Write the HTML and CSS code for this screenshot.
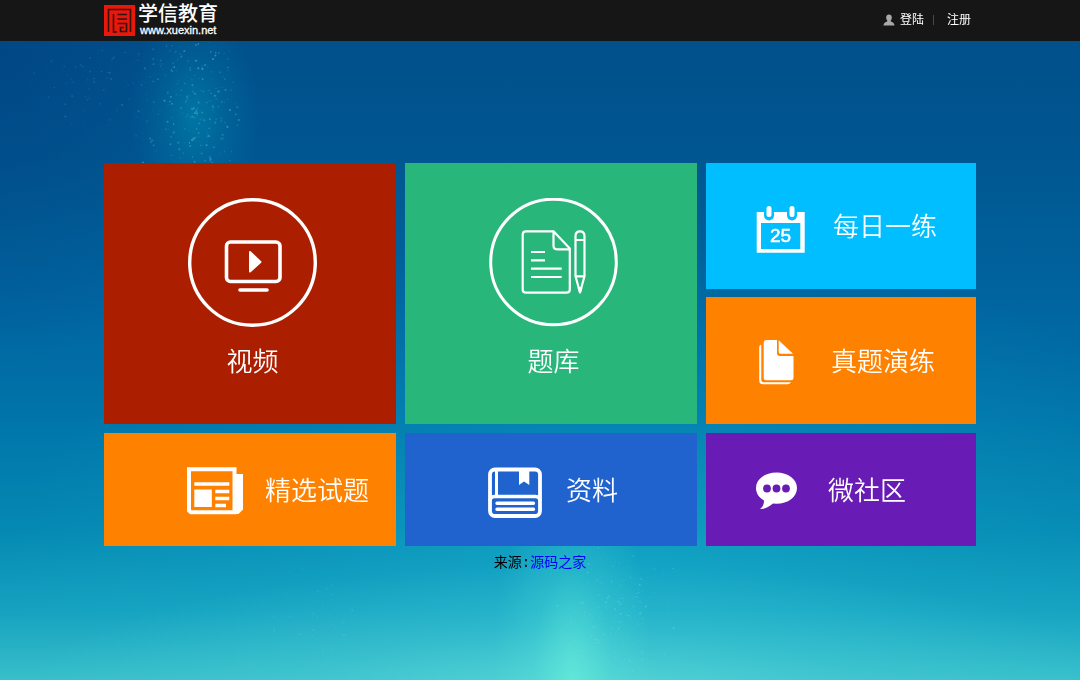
FILE: index.html
```html
<!DOCTYPE html>
<html lang="zh-CN">
<head>
<meta charset="utf-8">
<meta name="viewport" content="width=device-width, initial-scale=1">
<title>学信教育</title>
<link rel="stylesheet" href="styles.css">
</head>
<body>
<canvas class="stars" id="stars" aria-hidden="true"></canvas>
<header class="topbar">
  <div class="wrap topbar-inner">
    <a class="logo" href="#">
      <svg class="logo-mark" viewBox="0 0 31 31" aria-hidden="true">
        <rect width="31" height="31" fill="#ea170b"/>
        <path d="M4.500 27V4.500H26.500V27M9.500 9V27H13M13.500 9.500H23M13.500 14H23M13.500 18.500H22.500V26.500H16.500V22.500H20" fill="none" stroke="#36100d" stroke-width="1.600"/>
      </svg>
      <span class="logo-text"><span class="logo-name">学信教育</span><span class="logo-url">www.xuexin.net</span></span>
    </a>
    <nav class="account">
      <a href="#"><svg class="user" viewBox="0 0 12 12" aria-hidden="true"><path d="M6 0.500C8 .500 9 2 8.800 4 8.700 5.500 8 6 7.600 6.800 7.600 8 11.500 8.300 11.500 11.500H.5C.5 8.300 4.400 8 4.400 6.800 4 6 3.300 5.500 3.200 4 3 2 4 .500 6 .500Z" fill="#a9a9a9"/></svg>登陆</a>
      <span class="divider"></span>
      <a href="#">注册</a>
    </nav>
  </div>
</header>
<main class="wrap">
  <div class="tiles">
    <a class="tile large video" href="#">
      <svg class="round-icon" viewBox="0 0 130 130" fill="none" stroke="#fff" aria-hidden="true">
        <circle cx="64.500" cy="64.500" r="62.800" stroke-width="3.400"/>
        <rect x="38.500" y="44" width="53.500" height="39.500" rx="4" stroke-width="3.600"/>
        <path d="M62 54V73.500L72.500 64Z" fill="#fff" stroke-width="2" stroke-linejoin="round"/>
        <path d="M52 92H79" stroke-width="3.600" stroke-linecap="round"/>
      </svg>
      <span>视频</span>
    </a>
    <a class="tile large bank" href="#">
      <svg class="round-icon" viewBox="0 0 130 130" fill="none" stroke="#fff" aria-hidden="true">
        <circle cx="64.500" cy="64" r="62.800" stroke-width="3"/>
        <g stroke-width="2.200" stroke-linejoin="round">
          <path d="M64.500 33.300H37Q33.700 33.300 33.700 36.500V91.500Q33.700 94.700 37 94.700H77.500Q80.800 94.700 80.800 91.500V50.500L64.500 33.300V47.500Q64.500 51.300 68 51.300H80.800"/>
          <path d="M42 54H56M42 62.300H56M42 70.700H72.700M42 79H72.700"/>
          <path d="M86.500 78.300V38Q86.500 33.300 91 33.300T95.500 38V78.300L91 94.500ZM86.500 42H95.500M86.500 78.300H95.500"/>
          <path d="M89.800 90H92.200L91 94Z" fill="#fff"/>
        </g>
      </svg>
      <span>题库</span>
    </a>
    <div class="stack">
      <a class="tile small daily" href="#">
        <svg class="icon-50" viewBox="0 0 50 60" aria-hidden="true">
          <path d="M.7 16H48.700V56.700H.7ZM5 27V53H44.300V27Z" fill="#fff" fill-rule="evenodd"/>
          <path d="M13 13V19.500M36 13V19.500" stroke="#00beff" stroke-width="10" stroke-linecap="round"/>
          <path d="M13 12.500V18.500M36 12.500V18.500" stroke="#fff" stroke-width="5" stroke-linecap="round"/>
          <text class="date" x="24.500" y="46" text-anchor="middle">25</text>
        </svg>
        <span>每日一练</span>
      </a>
      <a class="tile small exam" href="#">
        <svg class="icon-48" viewBox="0 0 48 60" fill="#fff" aria-hidden="true">
          <path d="M10 9H21V22Q21 25 24 25H37.500V47Q37.500 49.300 35 49.300H10Q7.700 49.300 7.700 47V11.500Q7.700 9 10 9Z"/>
          <path d="M22.700 9.200L37 22.800H24.500Q22.700 22.800 22.700 21Z"/>
          <path d="M5.300 13.500V49Q5.300 51.300 7.700 51.300H35Q33.800 53.300 31.500 53.300H7Q3.200 53.300 3.200 49.500V16Q3.200 14 5.300 13.500Z"/>
        </svg>
        <span>真题演练</span>
      </a>
    </div>
    <a class="tile small wide selected" href="#">
      <svg class="icon-57" viewBox="0 0 57 60" fill="none" stroke="#fff" aria-hidden="true">
        <path d="M2 9.300H47.500V52.200H4L2 50.500Z" stroke-width="4"/>
        <path d="M48 14H56V49.500L51.500 54H46V14Z" fill="#fff" stroke="none"/>
        <path d="M7.300 24H42.300M28.300 31.500H42.300M28.300 38.500H42.300M28.300 45.500H39" stroke-width="3.600"/>
        <path d="M7.300 29.500H24.800V47H7.300Z" fill="#fff" stroke="none"/>
      </svg>
      <span>精选试题</span>
    </a>
    <a class="tile small wide material" href="#">
      <svg class="icon-57" viewBox="0 0 57 60" fill="none" stroke="#fff" aria-hidden="true">
        <rect x="2" y="9.500" width="50" height="46.500" rx="5" stroke-width="3.800"/>
        <path d="M8.500 9V37" stroke-width="3"/>
        <path d="M2 41Q2 36.500 6.500 36.500H47.500Q52 36.500 52 41" stroke-width="3.600"/>
        <path d="M9 43.300H45.500M9 49.300H45.500" stroke-width="3.400" stroke-linecap="round"/>
        <path d="M31 10H41.300V25L36 21.500L31 25Z" fill="#fff" stroke="none"/>
      </svg>
      <span>资料</span>
    </a>
    <a class="tile small community" href="#">
      <svg class="icon-45" viewBox="0 0 45 60" aria-hidden="true">
        <path d="M20.500 12.500C32 12.500 41 19 41 28S32 43.800 20.500 43.800L17 43.500C13 47 9 49 4 49 7 47 8 44 8 40.500 3 37.500 0 33.500 0 28 0 19 9 12.500 20.500 12.500Z" fill="#fff"/>
        <g fill="#681bb5"><circle cx="11" cy="28.500" r="3.900"/><circle cx="20.500" cy="28.500" r="3.900"/><circle cx="30" cy="28.500" r="3.900"/></g>
      </svg>
      <span>微社区</span>
    </a>
  </div>
  <p class="source">来源:<a href="#">源码之家</a></p>
</main>
<script src="stars.js"></script>
</body>
</html>
```
FILE: styles.css
```css
* { box-sizing: border-box; }

body {
  margin: 0;
  min-height: 100vh;
  font-family: "Liberation Sans", "Noto Sans CJK SC", sans-serif;
  background:
    radial-gradient(ellipse 65px 110px at 18% 17%, rgba(0, 150, 185, .5), rgba(0, 150, 185, .2) 50%, transparent),
    radial-gradient(ellipse 80px 220px at 53% 100%, rgba(110, 245, 220, .6), rgba(90, 235, 220, .22) 50%, transparent),
    radial-gradient(ellipse 560px 130px at 54% 102%, rgba(120, 230, 220, .5), rgba(110, 225, 220, .2) 50%, transparent),
    radial-gradient(ellipse 620px 340px at 58% 84%, rgba(30, 190, 215, .4), rgba(30, 190, 215, .16) 50%, transparent),
    radial-gradient(ellipse 200px 300px at 0 10%, rgba(0, 50, 120, .3), transparent),
    linear-gradient(#00508b 6%, #005791 24%, #0065a0 45%, #0075aa 62%, #0589b3 78%, #16a2c0 90%, #38bfca);
  background-attachment: fixed;
}

a { text-decoration: none; }

svg { display: block; flex: none; }

.stars {
  position: fixed;
  inset: 0;
  width: 100%;
  height: 100%;
  z-index: -1;
}

.wrap {
  width: 100%;
  max-width: 872px;
  margin: 0 auto;
}

.topbar { background: #161616; }

.topbar-inner {
  display: flex;
  justify-content: space-between;
  align-items: center;
  height: 41px;
  padding-bottom: 1px;
}

.logo {
  display: flex;
  gap: 3px;
  align-items: center;
  color: #fff;
}

.logo-mark { width: 31px; height: 31px; }

.logo-text { display: flex; flex-direction: column; }

.logo-name {
  font-size: 20px;
  line-height: 20px;
  font-weight: 500;
}

.logo-url {
  padding-left: 2px;
  font-size: 11px;
  line-height: 12px;
  -webkit-text-stroke: 0.3px #fff;
}

.account {
  display: flex;
  align-items: center;
  padding-right: 5px;
  font-size: 12px;
  line-height: 16px;
}

.account a {
  display: flex;
  align-items: center;
  gap: 5px;
  color: #fff;
}

.user { width: 12px; height: 12px; }

.divider {
  width: 1px;
  height: 10px;
  margin: 0 13px 0 9px;
  background: #484848;
}

.tiles {
  display: grid;
  grid-template-columns: 292fr 292fr 270fr;
  gap: 9px;
  padding-top: 122px;
}

.stack {
  display: grid;
  grid-template-rows: 126fr 127fr;
  gap: 8px;
}

.tile {
  display: flex;
  align-items: center;
  color: #fff;
  font-family: "Noto Sans CJK SC", sans-serif;
  font-size: 26px;
  font-weight: 350;
  line-height: 40px;
}

.large {
  flex-direction: column;
  gap: 12px;
  padding: 35px 0 44px 5px;
}

.round-icon { width: 130px; height: 130px; }

.small {
  gap: 27px;
  min-height: 113px;
  padding-left: 50px;
}

.small span { padding-bottom: 2px; }

.wide { gap: 21px; padding-left: 83px; }

.icon-45 { width: 45px; height: 60px; }
.icon-48 { width: 48px; height: 60px; }
.icon-50 { width: 50px; height: 60px; }
.icon-57 { width: 57px; height: 60px; }

.date {
  fill: #fff;
  stroke: #fff;
  stroke-width: 0.5px;
  font: 19px "Liberation Sans", sans-serif;
}

.video { background: #ac1e00; }
.bank { background: #29b67a; }
.daily { background: #00beff; }
.exam, .selected { background: #ff8100; }
.material { background: #2063ce; }
.community { background: #681bb5; }

.source {
  margin: 7px 0 0;
  text-align: center;
  color: #000;
  font-family: "Liberation Mono", "Noto Sans CJK SC", monospace;
  font-size: 14px;
  line-height: 20px;
}

.source a { color: #00f; }
```
FILE: stars.js
```js
const canvas = document.getElementById("stars");
const ctx = canvas.getContext("2d");

// Clusters of faint specks: centre and spread as fractions of the window.
const clusters = [
  { x: 0.18, y: 0.16, sx: 0.05, sy: 0.12, count: 260, alpha: 0.4 },
  { x: 0.1, y: 0.12, sx: 0.08, sy: 0.09, count: 110, alpha: 0.22 },
  { x: 0.57, y: 0.9, sx: 0.06, sy: 0.12, count: 200, alpha: 0.35 },
  { x: 0.3, y: 0.91, sx: 0.06, sy: 0.08, count: 80, alpha: 0.2 }
];

function draw() {
  let seed = 7;
  const random = () => (seed = (seed * 16807) % 2147483647) / 2147483647;
  const spread = () => random() + random() - 1;
  canvas.width = innerWidth;
  canvas.height = innerHeight;
  for (const c of clusters) {
    for (let i = 0; i < c.count; i++) {
      const x = (c.x + spread() * c.sx) * canvas.width;
      const y = (c.y + spread() * c.sy) * canvas.height;
      ctx.fillStyle = `rgba(130, 225, 240, ${random() * c.alpha})`;
      ctx.beginPath();
      ctx.arc(x, y, 0.5 + random() * 0.6, 0, Math.PI * 2);
      ctx.fill();
    }
  }
}

draw();
addEventListener("resize", draw);
```
